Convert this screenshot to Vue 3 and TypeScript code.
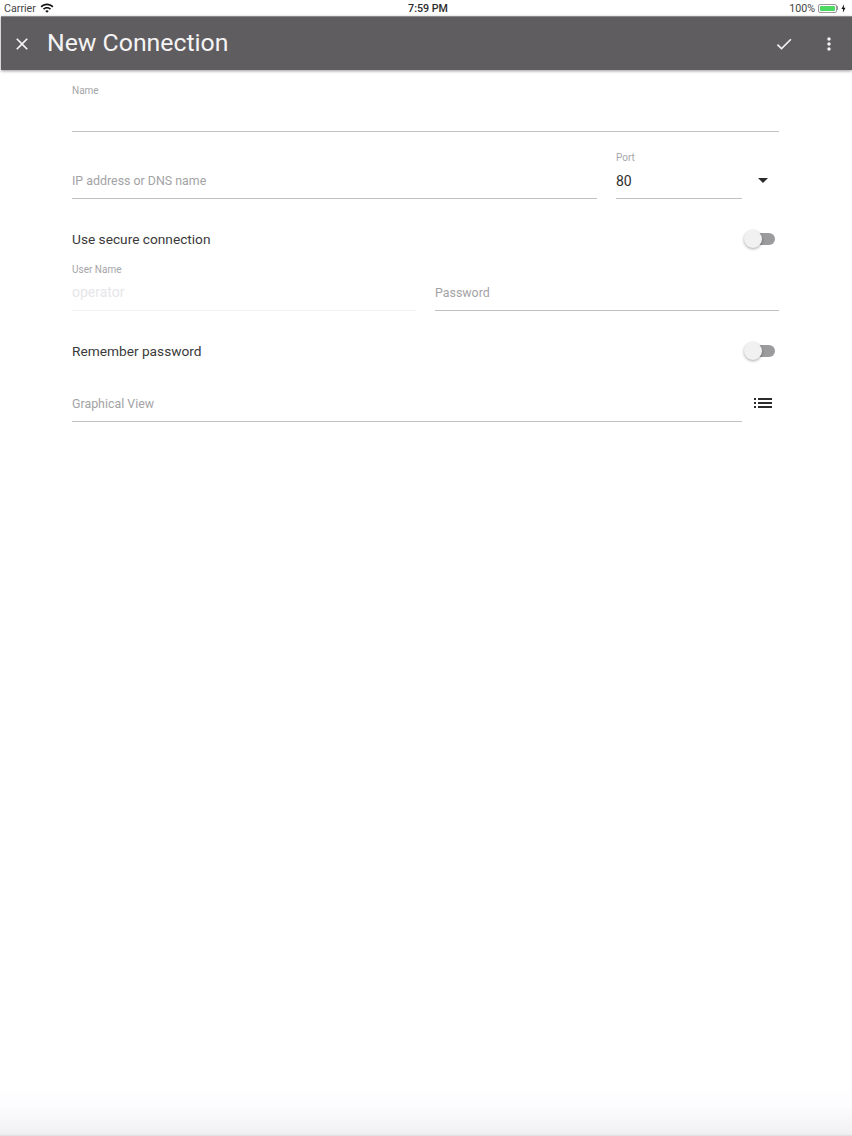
<script setup lang="ts">
const closeIcon = 'M19 6.41L17.59 5 12 10.59 6.41 5 5 6.41 10.59 12 5 17.59 6.41 19 12 13.41 17.59 19 19 17.59 13.41 12z'
const checkIcon = 'M9 16.17L4.83 12l-1.42 1.41L9 19 21 7l-1.41-1.41z'
const moreIcon = 'M12 8c1.1 0 2-.9 2-2s-.9-2-2-2-2 .9-2 2 .9 2 2 2zm0 2c-1.1 0-2 .9-2 2s.9 2 2 2 2-.9 2-2-.9-2-2-2zm0 6c-1.1 0-2 .9-2 2s.9 2 2 2 2-.9 2-2-.9-2-2-2z'
const listIcon = 'M3 13h2v-2H3v2zm0 4h2v-2H3v2zm0-8h2V7H3v2zm4 4h14v-2H7v2zm0 4h14v-2H7v2zM7 7v2h14V7H7z'
const wifiIcon = 'M1 9l2 2c4.97-4.97 13.03-4.97 18 0l2-2C16.93 2.93 7.08 2.93 1 9zm8 8l3 3 3-3c-1.65-1.66-4.34-1.66-6 0zm-4-4l2 2c2.76-2.76 7.24-2.76 10 0l2-2C15.14 9.14 8.87 9.14 5 13z'
</script>

<template>
  <div class="screen">
    <div class="status">
      <div class="status__left">
        <span>Carrier</span>
        <svg class="wifi" viewBox="0 0 24 24"><path :d="wifiIcon" /></svg>
      </div>
      <div class="status__time">7:59 PM</div>
      <div class="status__right">
        <span>100%</span>
        <div class="battery"><div class="battery__fill"></div></div>
        <div class="battery__tip"></div>
        <svg class="bolt" viewBox="0 0 6 10"><path d="M3.6 0L.6 5.6h2L2.2 10l3.2-6H3.3z" /></svg>
      </div>
    </div>

    <header class="toolbar">
      <svg class="toolbar__icon" viewBox="0 0 24 24"><path :d="closeIcon" /></svg>
      <h1 class="toolbar__title">New Connection</h1>
      <svg class="toolbar__icon" viewBox="0 0 24 24"><path :d="checkIcon" /></svg>
      <svg class="toolbar__icon toolbar__icon--more" viewBox="0 0 24 24"><path :d="moreIcon" /></svg>
    </header>

    <main class="form">
      <div class="field">
        <label class="field__label">Name</label>
      </div>

      <div class="row row--address">
        <div class="field field--grow">
          <span class="field__hint">IP address or DNS name</span>
        </div>
        <div class="field field--port">
          <label class="field__label">Port</label>
          <span class="field__value">80</span>
        </div>
        <div class="side-icon">
          <svg class="icon" viewBox="0 0 24 24"><path d="M7 10l5 5 5-5z" /></svg>
        </div>
      </div>

      <div class="toggle-row">
        <span>Use secure connection</span>
        <div class="switch"><div class="switch__thumb"></div></div>
      </div>

      <div class="row row--user">
        <div class="field field--grow field--disabled">
          <label class="field__label">User Name</label>
          <span class="field__value">operator</span>
        </div>
        <div class="field field--grow">
          <span class="field__hint">Password</span>
        </div>
      </div>

      <div class="toggle-row">
        <span>Remember password</span>
        <div class="switch"><div class="switch__thumb"></div></div>
      </div>

      <div class="row row--view">
        <div class="field field--grow">
          <span class="field__hint">Graphical View</span>
        </div>
        <div class="side-icon">
          <svg class="icon" viewBox="0 0 24 24"><path :d="listIcon" /></svg>
        </div>
      </div>
    </main>
  </div>
</template>

<style>
html, body {
  margin: 0;
  background: #fff;
}
</style>

<style scoped>
.screen {
  height: 1136px;
  overflow: hidden;
  font-family: Roboto, "Liberation Sans", sans-serif;
  background: linear-gradient(to bottom, #fff 1085px, #fdfcfe 1105px, #f1f0f2 1134px, #dcdcdc 1136px);
}

.status {
  height: 16px;
  display: grid;
  grid-template-columns: 1fr auto 1fr;
  align-items: center;
  padding: 0 0 0 4px;
  font-size: 10.7px;
  color: #444;
  background: #fff;
}

.status__left {
  display: flex;
  align-items: center;
  gap: 4px;
}

.wifi {
  width: 14px;
  height: 14px;
  fill: #111;
}

.status__time {
  font-weight: 500;
  color: #2b2b2b;
}

.status__right {
  display: flex;
  align-items: center;
  justify-content: flex-end;
  padding-right: 6px;
}

.battery {
  width: 19px;
  height: 9px;
  margin-left: 3px;
  padding: 1px;
  box-sizing: border-box;
  border: 1px solid #999;
  border-radius: 2px;
}

.battery__fill {
  height: 100%;
  background: #4cd964;
  border-radius: 1px;
}

.battery__tip {
  width: 1px;
  height: 4px;
  background: #999;
}

.bolt {
  width: 5px;
  height: 9px;
  margin-left: 3px;
  fill: #111;
}

.toolbar {
  height: 54px;
  margin-left: 1px;
  display: flex;
  align-items: center;
  gap: 20px;
  padding: 0 13px 0 11px;
  background: #5f5d60;
  border-top: 1px solid #8a898b;
  box-sizing: border-box;
  box-shadow: 0 1px 3px rgba(0, 0, 0, 0.4);
  fill: #f4f4f4;
}

.toolbar__title {
  flex: 1;
  margin: -2px 0 0 -5px;
  font-size: 24.8px;
  font-weight: 400;
  color: #f4f4f4;
}

.toolbar__icon {
  width: 20px;
  height: 20px;
  flex: none;
}

.toolbar__icon--more {
  margin-left: 5px;
}

.icon {
  width: 24px;
  height: 24px;
  flex: none;
  fill: #2b2b2b;
}

.form {
  padding: 14px 73px 0 72px;
}

.row {
  display: flex;
}

.row--address {
  margin-top: 19px;
}

.row--user {
  margin-top: 4px;
  gap: 19px;
}

.row--view {
  margin-top: 3px;
}

.field {
  height: 48px;
  box-sizing: border-box;
  border-bottom: 1px solid #c2c1c2;
  display: flex;
  flex-direction: column;
  justify-content: flex-end;
  padding-bottom: 5px;
  position: relative;
}

.field--grow {
  flex: 1;
}

.field--port {
  width: 126px;
  margin-left: 19px;
}

.field--disabled {
  border-bottom-color: #f1f1f1;
  padding-bottom: 6px;
}

.field--disabled .field__value {
  color: #e6e6ea;
}

.field__label {
  position: absolute;
  top: 1px;
  left: 0;
  font-size: 10px;
  line-height: 12px;
  color: #a5a5a7;
}

.field__hint,
.field__value {
  font-size: 12.4px;
  line-height: 24px;
  color: #a3a3a5;
}

.field__value {
  font-size: 14px;
  color: #2e2e2e;
}

.side-icon {
  width: 37px;
  display: flex;
  align-items: flex-end;
  justify-content: flex-end;
  padding: 0 4px 7px 0;
  box-sizing: border-box;
}

.toggle-row {
  height: 40px;
  margin-top: 20px;
  padding-right: 4px;
  display: flex;
  align-items: center;
  justify-content: space-between;
  font-size: 13.7px;
  color: #3a3a3a;
}

.switch {
  width: 30px;
  height: 12px;
  border-radius: 6px;
  background: #9b9a9c;
  position: relative;
}

.switch__thumb {
  position: absolute;
  left: -1px;
  top: -3px;
  width: 18px;
  height: 18px;
  border-radius: 50%;
  background: #f1f1f1;
  box-shadow: 0 1px 3px rgba(0, 0, 0, 0.35);
}
</style>
